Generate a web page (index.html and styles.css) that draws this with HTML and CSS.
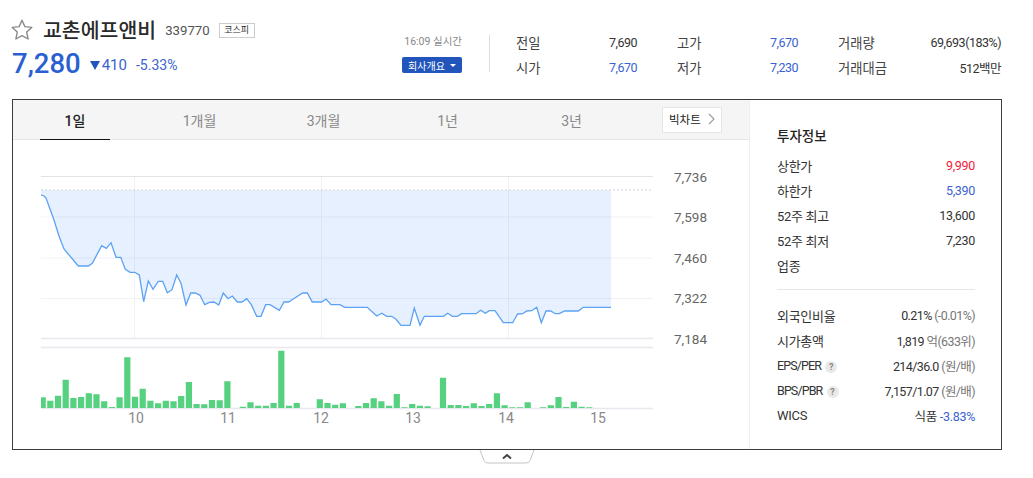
FILE: index.html
```html
<!DOCTYPE html>
<html lang="ko">

<head>
  <meta charset="UTF-8">
  <meta name="viewport" content="width=device-width, initial-scale=1.0">
  <title>교촌에프앤비</title>
  <link rel="stylesheet" href="styles.css">
</head>

<body>
  <div class="page">
    <header class="stock-head">
      <div class="stock-title">
        <div class="name-row">
          <svg class="star" viewBox="0 0 22 21" width="22" height="21">
            <path d="M11 1.2l2.9 6.4 6.9.8-5.1 4.7 1.4 6.9L11 16.6l-6.1 3.4 1.4-6.9L1.2 8.400l6.900-.8z" fill="none" stroke="#8a8a8a" stroke-width="1.4" stroke-linejoin="round" />
          </svg>
          <h1 class="name">교촌에프앤비</h1>
          <span class="code">339770</span>
          <span class="market">코스피</span>
        </div>
        <div class="price-row">
          <strong class="price">7,280</strong>
          <span class="down-arrow"></span>
          <span class="diff">410</span>
          <span class="rate">-5.33%</span>
        </div>
      </div>

      <div class="stock-meta">
        <span class="time">16:09 실시간</span>
        <a class="company-btn">회사개요<i class="caret"></i></a>
      </div>

      <div class="stock-stats">
        <div class="stat"><span class="stat-label">전일</span><span class="stat-val">7,690</span></div>
        <div class="stat"><span class="stat-label">고가</span><span class="stat-val blue">7,670</span></div>
        <div class="stat"><span class="stat-label">거래량</span><span class="stat-val">69,693(183%)</span></div>
        <div class="stat"><span class="stat-label">시가</span><span class="stat-val blue">7,670</span></div>
        <div class="stat"><span class="stat-label">저가</span><span class="stat-val blue">7,230</span></div>
        <div class="stat"><span class="stat-label">거래대금</span><span class="stat-val">512백만</span></div>
      </div>
    </header>

    <section class="frame">
      <div class="chart-side">
        <nav class="tabs">
          <a class="tab active"><span>1일</span></a>
          <a class="tab"><span>1개월</span></a>
          <a class="tab"><span>3개월</span></a>
          <a class="tab"><span>1년</span></a>
          <a class="tab"><span>3년</span></a>
          <a class="big-chart">빅차트
            <svg viewBox="0 0 7 12" width="7" height="12">
              <path d="M1 1l5 5-5 5" fill="none" stroke="#999" stroke-width="1.1" />
            </svg>
          </a>
        </nav>

        <svg class="chart" viewBox="13 140 736 309" width="736" height="309">
          <!-- grid -->
          <path class="grid-top" d="M41 176.500H653" />
          <path class="grid" d="M41 217H653M41 258H653M41 298.500H653M134.500 177V338M321.500 177V338M508.500 177V338" />
          <path class="grid-end" d="M41 338.500H653M41 347.500H653M41 408.500H653" />

          <!-- price -->
          <path class="area" d="M41 190V195L44 196L46 198L50 209L54 220L59 236L64 249L78.300 266L88.300 266L92.300 263.300L101.700 245.700L106.300 248.300L111 242.700L116 257.300L120.700 257.300L125.300 269.300L130 272.300L134.700 272.300L139.300 275L143.700 301.700L148.300 281L153 289.300L158.300 281.300L162.700 281.300L167.300 292.700L172 289.700L176.700 275L181 283.300L186 305L190.700 293L195.300 293L200 295.300L204.700 304.700L209.300 302.300L214 302L218.700 305L223.300 293L228 298.700L232.300 296L237.300 302L242 302L246.700 298.700L251.300 304.700L256.700 316.300L261 316.300L265.700 304.700L270 304.700L279.300 310.300L284 302L288.700 302L293.300 299L302.700 293L307.300 293L312.300 302L321.700 302L326 299L331 304.700L340 304.700L344.700 307.300L367.300 307.300L376.700 316L381.700 313.300L386.700 316.300L391.700 316.300L396 319.300L401 325.300L410 325.300L414.300 308L420 325.300L424.300 316.300L443.300 316.300L447.700 313.300L452.300 316.300L457.300 316.300L461.700 313.700L476 313.700L480.700 310.300L485.300 313.300L489.300 310.700L495 310.700L503.300 322.700L512.700 322.700L517.700 314L522.700 313.700L526.700 311L531.700 310.700L536.700 307.300L541.300 322.700L546 311L550.700 311L555.300 313.700L559.300 313.700L564.700 311L578.300 311L583.300 307.300L611 307.300V190Z" />
          <path class="base-line" d="M41 190H651" />
          <path class="price-line" d="M41 195L44 196L46 198L50 209L54 220L59 236L64 249L78.300 266L88.300 266L92.300 263.300L101.700 245.700L106.300 248.300L111 242.700L116 257.300L120.700 257.300L125.300 269.300L130 272.300L134.700 272.300L139.300 275L143.700 301.700L148.300 281L153 289.300L158.300 281.300L162.700 281.300L167.300 292.700L172 289.700L176.700 275L181 283.300L186 305L190.700 293L195.300 293L200 295.300L204.700 304.700L209.300 302.300L214 302L218.700 305L223.300 293L228 298.700L232.300 296L237.300 302L242 302L246.700 298.700L251.300 304.700L256.700 316.300L261 316.300L265.700 304.700L270 304.700L279.300 310.300L284 302L288.700 302L293.300 299L302.700 293L307.300 293L312.300 302L321.700 302L326 299L331 304.700L340 304.700L344.700 307.300L367.300 307.300L376.700 316L381.700 313.300L386.700 316.300L391.700 316.300L396 319.300L401 325.300L410 325.300L414.300 308L420 325.300L424.300 316.300L443.300 316.300L447.700 313.300L452.300 316.300L457.300 316.300L461.700 313.700L476 313.700L480.700 310.300L485.300 313.300L489.300 310.700L495 310.700L503.300 322.700L512.700 322.700L517.700 314L522.700 313.700L526.700 311L531.700 310.700L536.700 307.300L541.300 322.700L546 311L550.700 311L555.300 313.700L559.300 313.700L564.700 311L578.300 311L583.300 307.300L611 307.300" />

          <!-- volume -->
          <path class="first-bar" d="M43.400 408V397.300" />
          <path class="bars" d="M50.300 408V400.700M58 408V395.700M65.700 408V379.700M73.400 408V398M81.100 408V397M88.800 408V393.300M96.500 408V394.300M104.200 408V401.300M111.900 408V407M119.600 408V397.300M127.300 408V357.300M135 408V396.700M142.700 408V388.700M150.400 408V400.700M158.100 408V403.300M165.800 408V400.700M173.500 408V401.300M181.200 408V396M188.900 408V382M196.600 408V404M204.300 408V404.300M212 408V400M219.700 408V400.300M227.400 408V381.300M242.800 408V406.700M250.500 408V402.300M258.200 408V405.700M265.900 408V405.700M273.600 408V403M281.300 408V350.700M289 408V405.700M296.700 408V403M319.800 408V399.300M327.500 408V403M335.200 408V404.700M342.900 408V403.300M358.300 408V406M366 408V403M373.700 408V398.300M381.400 408V401.300M389.100 408V405.700M396.800 408V394M404.500 408V407.300M412.200 408V404M419.900 408V405.700M427.600 408V406.300M443 408V377.700M450.700 408V405M458.400 408V405M466.100 408V406M473.800 408V403.300M481.500 408V406M489.200 408V404M496.900 408V393.300M504.600 408V405.300M512.300 408V407.300M520 408V407.300M527.700 408V402.300M543.100 408V407.300M550.800 408V405.300M558.500 408V397M566.200 408V407M573.900 408V401.700M581.600 408V406.700M589.300 408V407.300" />

          <!-- axis labels -->
          <g class="y-labels">
            <text x="674" y="182">7,736</text>
            <text x="674" y="222">7,598</text>
            <text x="674" y="263">7,460</text>
            <text x="674" y="303">7,322</text>
            <text x="674" y="344">7,184</text>
          </g>
          <g class="x-labels">
            <text x="136" y="423">10</text>
            <text x="228" y="423">11</text>
            <text x="321" y="423">12</text>
            <text x="413" y="423">13</text>
            <text x="506" y="423">14</text>
            <text x="598" y="423">15</text>
          </g>
        </svg>
      </div>

      <aside class="info">
        <h2 class="info-title">투자정보</h2>
        <ul class="info-list">
          <li><span class="label">상한가</span><span class="red">9,990</span></li>
          <li><span class="label">하한가</span><span class="blue">5,390</span></li>
          <li><span class="label">52주 최고</span><span>13,600</span></li>
          <li><span class="label">52주 최저</span><span>7,230</span></li>
          <li><span class="label">업종</span></li>
        </ul>
        <ul class="info-list second">
          <li><span class="label">외국인비율</span><span class="val">0.21% <em>(-0.01%)</em></span></li>
          <li><span class="label">시가총액</span><span class="val">1,819 <em>억(633위)</em></span></li>
          <li><span class="label tight">EPS/PER <i class="help">?</i></span><span class="val">214/36.0 <em>(원/배)</em></span></li>
          <li><span class="label tight">BPS/PBR <i class="help">?</i></span><span class="val">7,157/1.07 <em>(원/배)</em></span></li>
          <li><span class="label">WICS</span><span>식품 <b class="blue">-3.83%</b></span></li>
        </ul>
      </aside>
    </section>

    <a class="fold">
      <svg viewBox="0 0 56 14" width="56" height="14">
        <path d="M1 0l4 10.500q1 2.500 4 2.500h38q3 0 4-2.500L55 0" fill="#fff" stroke="#c4c4c4" />
        <path d="M24 8.500l4-3.500 4 3.500" fill="none" stroke="#444" stroke-width="2" />
      </svg>
    </a>
  </div>
</body>

</html>
```

FILE: styles.css
```css
* {
  margin: 0;
  padding: 0;
  box-sizing: border-box;
}

body {
  font-family: Roboto, 'Noto Sans CJK KR', sans-serif;
  font-size: 13px;
  color: #333;
  background: #fff;
}

ul {
  list-style: none;
}

em,
i {
  font-style: normal;
}

.blue {
  color: #3a63cf;
}

.red {
  color: #f5213b;
}

.page {
  width: 990px;
  margin-left: 12px;
}

/* top */
.stock-head {
  display: flex;
  height: 99px;
}

.stock-title {
  width: 390px;
  padding-top: 16px;
}

.name-row {
  display: flex;
  align-items: center;
  height: 26px;
}

.star {
  margin-left: -1px;
}

.name {
  margin-left: 10px;
  font-size: 20.500px;
  font-weight: 500;
  color: #2a2a2a;
}

.code {
  margin: 3px 0 0 9px;
  font-size: 13.200px;
  color: #555;
}

.market {
  margin: 3px 0 0 9px;
  width: 36px;
  height: 15px;
  border: 1px solid #ccc;
  font-size: 9px;
  line-height: 12px;
  text-align: center;
  color: #333;
}

.price-row {
  display: flex;
  align-items: center;
  height: 34px;
  margin-top: 4px;
}

.price {
  font-size: 27.500px;
  font-weight: 500;
  color: #2a5fd1;
}

.down-arrow {
  margin: 4px 2px 0 9px;
  border-left: 5.500px solid transparent;
  border-right: 5.500px solid transparent;
  border-top: 9px solid #2255bb;
}

.diff {
  margin-top: 4px;
  font-size: 15px;
  color: #3a63cf;
}

.rate {
  margin: 4px 0 0 9px;
  font-size: 14px;
  color: #3a63cf;
}

.stock-meta {
  display: flex;
  flex-direction: column;
  align-items: flex-end;
  width: 60px;
  padding-top: 35px;
}

.time {
  font-size: 10.500px;
  line-height: 14px;
  color: #888;
  white-space: nowrap;
}

.company-btn {
  display: flex;
  align-items: center;
  justify-content: center;
  gap: 5px;
  width: 60px;
  height: 16px;
  margin-top: 8px;
  border-radius: 2px;
  background: #2255bb;
  color: #fff;
  font-size: 10px;
}

.caret {
  border-left: 3px solid transparent;
  border-right: 3px solid transparent;
  border-top: 3px solid #fff;
}

.stock-stats {
  display: grid;
  grid-template-columns: 121px 121px 163px;
  grid-auto-rows: 25px;
  column-gap: 40px;
  height: 50px;
  margin: 30px 0 0 27px;
  padding-left: 27px;
  border-left: 0;
  position: relative;
  width: 512px;
  font-size: 12.500px;
}

.stock-stats::before {
  content: '';
  position: absolute;
  left: 0;
  top: 5px;
  bottom: 8px;
  width: 1px;
  background: #ddd;
}

.stat {
  display: flex;
  align-items: center;
  justify-content: space-between;
  white-space: nowrap;
}

.stat-label {
  font-size: 13.300px;
  color: #444;
}

.stat-val {
  letter-spacing: -0.5px;
}

/* frame */
.frame {
  display: flex;
  height: 351px;
  border: 1px solid #3c3c3c;
}

.chart-side {
  width: 736px;
}

.tabs {
  display: flex;
  align-items: center;
  height: 40px;
  background: #f5f5f5;
  border-bottom: 1px solid #e6e6e6;
}

.tab {
  display: flex;
  justify-content: center;
  width: 124px;
  height: 40px;
  font-size: 14px;
  color: #888;
}

.tab span {
  width: 70px;
  padding-left: 1px;
  line-height: 42px;
  text-align: center;
}

.tab.active span {
  height: 40px;
  padding-left: 0;
  border-bottom: 1px solid #111;
  font-weight: 500;
  color: #222;
}

.big-chart {
  display: flex;
  align-items: center;
  justify-content: space-between;
  width: 60px;
  height: 26px;
  margin-left: 29px;
  padding: 0 6px 2px 6px;
  border: 1px solid #e6e6e6;
  background: #fff;
  font-size: 11.500px;
  color: #222;
}

.chart {
  display: block;
}

.grid {
  fill: none;
  stroke: #f1f2f6;
  stroke-width: 1;
}

.grid-top {
  fill: none;
  stroke: #e2e3e8;
}

.grid-end {
  fill: none;
  stroke: #e8e8ee;
  stroke-width: 1.500;
}

.area {
  fill: #2e86f5;
  fill-opacity: 0.12;
}

.base-line {
  fill: none;
  stroke: #d4d4dc;
  stroke-dasharray: 2 2;
}

.price-line {
  fill: none;
  stroke: #5ba2f5;
  stroke-width: 1.300;
}

.bars {
  fill: none;
  stroke: #55d17f;
  stroke-width: 6.200;
}

.first-bar {
  fill: none;
  stroke: #55d17f;
  stroke-width: 4.800;
}

.y-labels text {
  font-size: 13.500px;
  fill: #666;
}

.x-labels text {
  font-size: 14px;
  fill: #888;
  text-anchor: middle;
}

/* right panel */
.info {
  flex: 1;
  padding: 25px 26px 0 27px;
  border-left: 1px solid #eee;
}

.info-title {
  height: 30px;
  margin-bottom: -2px;
  font-size: 13.500px;
  font-weight: 500;
  line-height: 22px;
  color: #222;
}

.info-list li {
  display: flex;
  justify-content: space-between;
  align-items: center;
  height: 25px;
  font-size: 12.500px;
  letter-spacing: -0.3px;
  white-space: nowrap;
}

.info-list .label {
  font-size: 13px;
}

.info-list .tight {
  font-size: 12.500px;
  letter-spacing: -0.9px;
}

.info-list .val {
  letter-spacing: -0.6px;
}

.info-list.second {
  margin-top: 11px;
  padding-top: 13px;
  border-top: 1px solid #e6e6e6;
}

.info-list em {
  color: #777;
}

.info-list b {
  font-weight: 400;
}

.help {
  display: inline-block;
  width: 12px;
  height: 12px;
  margin-left: 2px;
  border-radius: 50%;
  background: #e9e9e9;
  color: #888;
  font-size: 9px;
  font-weight: 700;
  line-height: 12px;
  letter-spacing: 0;
  text-align: center;
}

.fold {
  display: block;
  width: 56px;
  margin: 0 auto;
}

.fold svg {
  display: block;
}
```
